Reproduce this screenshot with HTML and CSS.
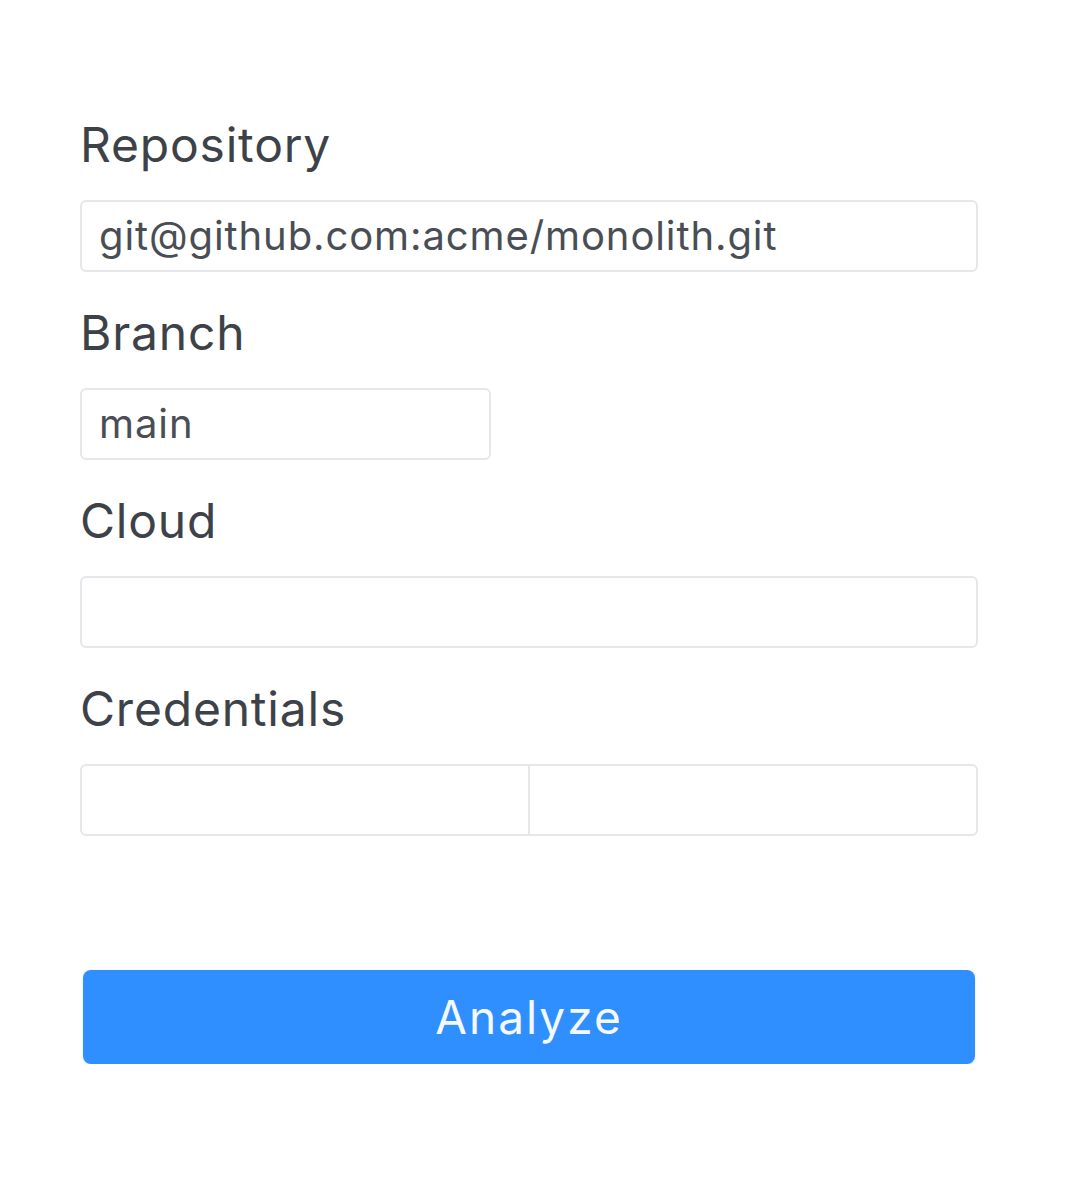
FILE: index.html
```html
<!DOCTYPE html>
<html lang="en">
<head>
<meta charset="utf-8">
<title>Analyze</title>
<link rel="stylesheet" href="styles.css">
</head>
<body>
<form class="form">
  <div class="field">
    <label class="label">Repository</label>
    <div class="input full">git@github.com:acme/monolith.git</div>
  </div>
  <div class="field">
    <label class="label">Branch</label>
    <div class="input short">main</div>
  </div>
  <div class="field">
    <label class="label">Cloud</label>
    <div class="input full"></div>
  </div>
  <div class="field">
    <label class="label">Credentials</label>
    <div class="input full split">
      <div class="half"></div>
      <div class="half"></div>
    </div>
  </div>
  <button type="button" class="button">Analyze</button>
</form>
</body>
</html>
```

FILE: styles.css
```css
html, body {
  margin: 0;
  padding: 0;
  background: #ffffff;
}

body {
  font-family: Inter, "Noto Sans", sans-serif;
}

.form {
  width: 898px;
  padding: 116px 0 0 80px;
  display: flex;
  flex-direction: column;
}

.field {
  display: flex;
  flex-direction: column;
  margin-bottom: 32px;
}

.label {
  font-size: 48px;
  line-height: 58px;
  letter-spacing: 0.8px;
  color: #3d4249;
  margin-bottom: 26px;
}

.input {
  box-sizing: border-box;
  height: 72px;
  border: 2px solid #e6e7ea;
  border-radius: 6px;
  padding: 0 17px;
  font-size: 40px;
  line-height: 68px;
  letter-spacing: 0.9px;
  color: #494e55;
  background: #fff;
  white-space: nowrap;
}

.full { width: 898px; }
.short { width: 411px; }

.split {
  display: flex;
  padding: 0;
}

.half {
  flex: 1;
}

.half + .half {
  border-left: 2px solid #e6e7ea;
}

.button {
  margin: 102px 0 0 3px;
  width: 892px;
  height: 94px;
  border: none;
  border-radius: 8px;
  background: #2f8ffe;
  color: #f4f8ff;
  font-family: Inter, "Noto Sans", sans-serif;
  font-size: 46px;
  letter-spacing: 2px;
  box-shadow: 0 1px 3px rgba(0, 0, 0, 0.12);
}
```
